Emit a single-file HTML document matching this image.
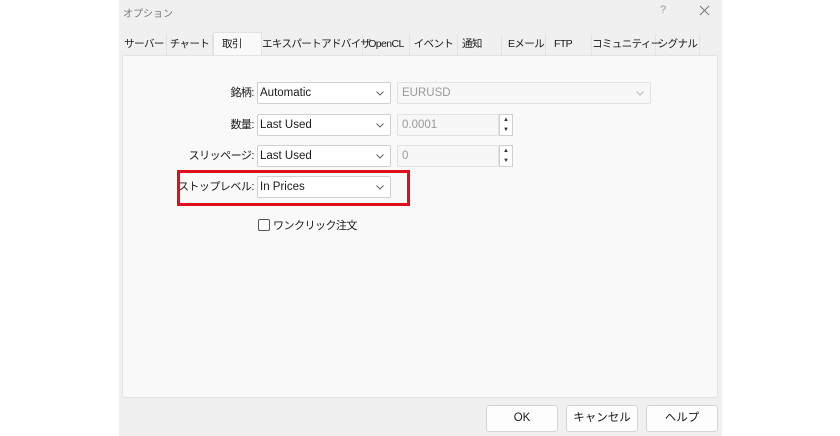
<!DOCTYPE html><html><head><meta charset="utf-8"><style>
*{box-sizing:border-box;margin:0;padding:0}
body{width:840px;height:436px;background:#fff;position:relative;font-family:"Liberation Sans","Noto Sans CJK JP",sans-serif;font-size:12px;color:#1a1a1a;overflow:hidden}
.dlg{position:absolute;left:119px;top:0;width:603px;height:436px;background:#f0f0f0}
.a{position:absolute;white-space:nowrap}
.tab{position:absolute;top:34px;height:21px;line-height:21px;text-align:center;font-size:10.5px;letter-spacing:-0.6px;white-space:nowrap;border-right:1px solid #e2e2e2;overflow:visible}
.panel{position:absolute;left:122px;top:55px;width:596px;height:343px;background:#f9f9f9;border:1px solid #e4e4e4}
.cb{position:absolute;height:22px;background:#fff;border:1px solid #d0d0d0;border-radius:2px;line-height:20px;padding-left:2px;font-size:11.5px}
.cb.dis{background:#f7f7f7;color:#9a9a9a;border-color:#e2e2e2;padding-left:4px}
.chev{position:absolute;right:6px;top:8px}
.lbl{position:absolute;font-size:11px;letter-spacing:-0.5px;text-align:right;width:120px;line-height:22px;white-space:nowrap}
.spin{position:absolute;width:14px;height:22px;border:1px solid #d0d0d0;background:#fff;font-size:6px;text-align:center;line-height:10px;color:#333}
.btn{position:absolute;top:405px;width:72px;height:27px;background:#fdfdfd;border:1px solid #d4d4d4;border-radius:3px;text-align:center;line-height:25px;font-size:11.5px}
</style></head><body>
<div class="dlg"></div>
<div class="a" style="left:123px;top:5px;font-size:10px;color:#777">オプション</div>
<div class="a" style="left:660px;top:4px;font-size:11px;color:#999">?</div>
<svg class="a" style="left:699px;top:5px" width="11" height="11"><path d="M1 1L10 10M10 1L1 10" stroke="#777" stroke-width="1"/></svg>
<div class="tab" style="left:122px;width:45px">サーバー</div>
<div class="tab" style="left:167px;width:46px">チャート</div>
<div class="tab" style="left:213px;width:49px;top:32px;height:24px;background:#f9f9f9;border:1px solid #e2e2e2;border-bottom:none;text-align:left;padding-left:8px;line-height:22px">取引</div>
<div class="tab" style="left:262px;width:101px">エキスパートアドバイザ</div>
<div class="tab" style="left:363px;width:47px">OpenCL</div>
<div class="tab" style="left:410px;width:48px">イベント</div>
<div class="tab" style="left:458px;width:44px;text-align:left;padding-left:4px">通知</div>
<div class="tab" style="left:502px;width:44px;text-align:left;padding-left:6px">Eメール</div>
<div class="tab" style="left:546px;width:46px;text-align:left;padding-left:8px">FTP</div>
<div class="tab" style="left:592px;width:64px;text-align:right;padding-right:2px">コミュニティー</div>
<div class="tab" style="left:656px;width:44px">シグナル</div>
<div class="panel"></div>
<div class="lbl" style="left:134px;top:82px">銘柄:</div>
<div class="cb" style="left:257px;top:82px;width:134px">Automatic<svg class="chev" width="8" height="5"><path d="M0.5 0.5L4 4L7.5 0.5" fill="none" stroke="#666"/></svg></div>
<div class="cb dis" style="left:397px;top:82px;width:254px">EURUSD<svg class="chev" width="8" height="5"><path d="M0.5 0.5L4 4L7.5 0.5" fill="none" stroke="#bbb"/></svg></div>
<div class="lbl" style="left:134px;top:114px">数量:</div>
<div class="cb" style="left:257px;top:114px;width:134px">Last Used<svg class="chev" width="8" height="5"><path d="M0.5 0.5L4 4L7.5 0.5" fill="none" stroke="#666"/></svg></div>
<div class="cb dis" style="left:397px;top:114px;width:102px">0.0001</div>
<div class="spin" style="left:499px;top:114px">▲<br>▼</div>
<div class="lbl" style="left:134px;top:145px">スリッページ:</div>
<div class="cb" style="left:257px;top:145px;width:134px">Last Used<svg class="chev" width="8" height="5"><path d="M0.5 0.5L4 4L7.5 0.5" fill="none" stroke="#666"/></svg></div>
<div class="cb dis" style="left:397px;top:145px;width:102px">0</div>
<div class="spin" style="left:499px;top:145px">▲<br>▼</div>
<div class="lbl" style="left:134px;top:176px">ストップレベル:</div>
<div class="cb" style="left:257px;top:176px;width:134px">In Prices<svg class="chev" width="8" height="5"><path d="M0.5 0.5L4 4L7.5 0.5" fill="none" stroke="#666"/></svg></div>
<div class="a" style="left:177px;top:170px;width:233px;height:36px;border:3px solid #e0101a"></div>
<div class="a" style="left:258px;top:219px;width:12px;height:12px;border:1px solid #555;border-radius:2px;background:#fff"></div>
<div class="a" style="left:273px;top:217px;font-size:11px;letter-spacing:-0.5px">ワンクリック注文</div>
<div class="btn" style="left:486px">OK</div>
<div class="btn" style="left:566px">キャンセル</div>
<div class="btn" style="left:646px">ヘルプ</div>
</body></html>
